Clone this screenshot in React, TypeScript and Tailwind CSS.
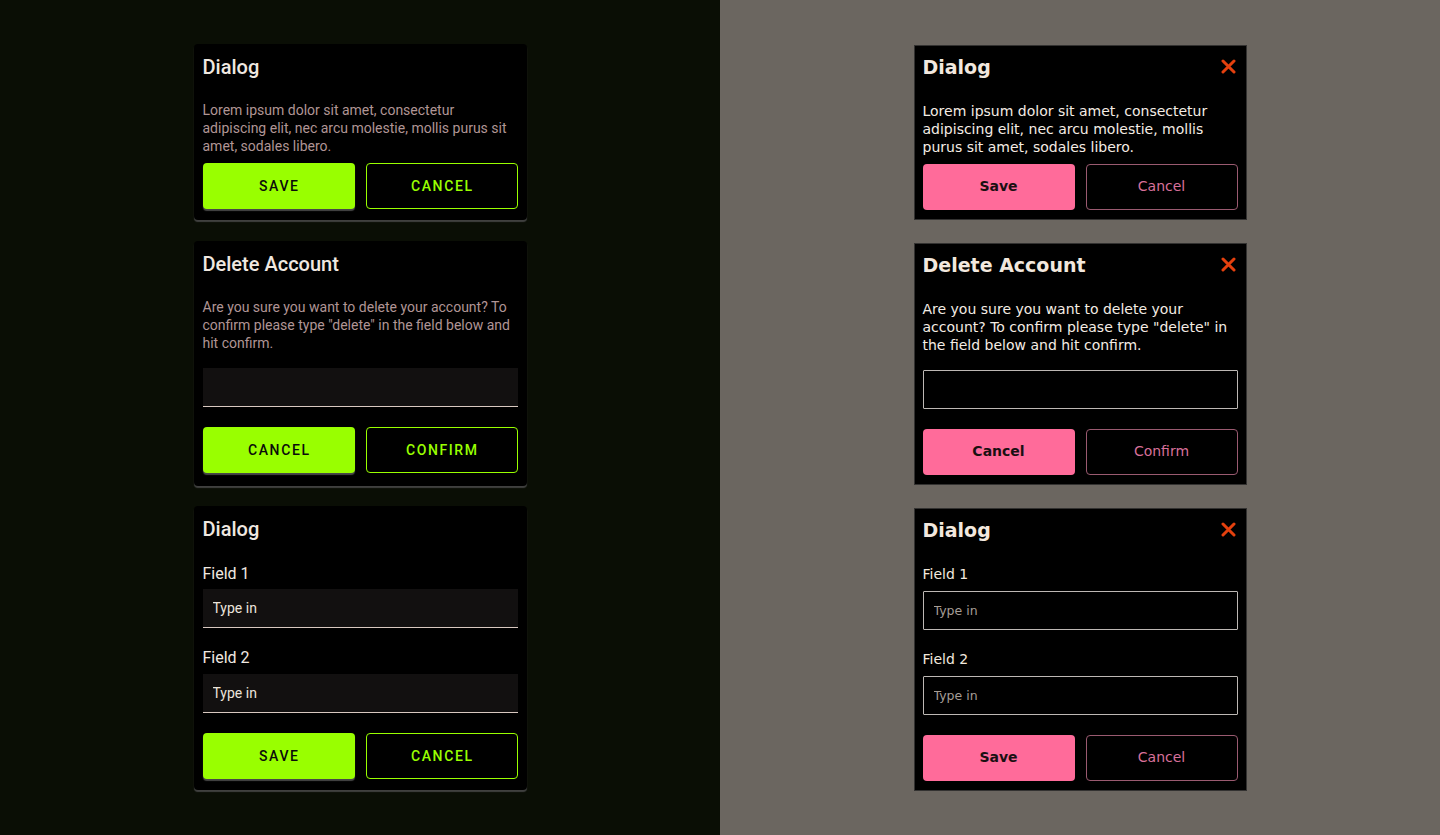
import React from 'react';

const roboto = { fontFamily: 'Roboto, "Liberation Sans", sans-serif' };
const mont = { fontFamily: '"DejaVu Sans", "Liberation Sans", sans-serif' };

/* ---------- left: material-ish dark theme ---------- */

function MatButton({ label, filled }: { label: string; filled?: boolean }) {
  return filled ? (
    <button className="h-[46px] rounded-[4px] bg-[#99ff00] pl-[1.6px] text-[14px] font-medium tracking-[1.6px] text-[#0b0b0b] shadow-[0_2px_1px_rgba(80,80,80,0.9)]">
      {label}
    </button>
  ) : (
    <button className="h-[46px] rounded-[4px] border border-[#99ff00] bg-black pl-[1.6px] text-[14px] font-medium tracking-[1.6px] text-[#99ff00]">
      {label}
    </button>
  );
}

function MatCard({ children, pad = 'pb-[11px]' }: { children: React.ReactNode; pad?: string }) {
  return (
    <div
      className={`flex w-[333px] flex-col rounded-[4px] bg-black px-[9px] pt-[9px] shadow-[0_2px_1px_rgba(70,70,70,0.9)] ${pad}`}
      style={roboto}
    >
      {children}
    </div>
  );
}

function MatTitle({ children }: { children: React.ReactNode }) {
  return <h2 className="text-[20px] font-medium leading-[28px] text-[#f0e8e0]">{children}</h2>;
}

function MatInput({ placeholder }: { placeholder?: string }) {
  return (
    <input
      className="h-[39px] w-full border-b border-[#d8c8c0] bg-[#121010] px-[10px] text-[14px] text-[#ece4dc] outline-none placeholder:text-[#ece4dc]"
      placeholder={placeholder}
    />
  );
}

/* ---------- right: pink outline theme ---------- */

function CloseX() {
  return (
    <svg width="15" height="15" viewBox="0 0 15 15" className="mr-[2px]">
      <path d="M2 2 L13 13 M13 2 L2 13" stroke="#e4400e" strokeWidth="3" strokeLinecap="round" />
    </svg>
  );
}

function PinkButton({ label, filled }: { label: string; filled?: boolean }) {
  return filled ? (
    <button className="h-[46px] rounded-[4px] bg-[#ff6b9a] text-[14px] font-semibold text-[#1a1012]">
      {label}
    </button>
  ) : (
    <button className="h-[46px] rounded-[4px] border border-[#9a5a70] bg-black text-[14px] text-[#d8709a]">
      {label}
    </button>
  );
}

function PinkCard({ children }: { children: React.ReactNode }) {
  return (
    <div className="flex w-[333px] flex-col border border-[#333231] bg-black px-[8px] pt-[7px] pb-[9px]" style={mont}>
      {children}
    </div>
  );
}

function PinkTitle({ children }: { children: React.ReactNode }) {
  return (
    <div className="flex items-center justify-between">
      <h2 className="text-[19px] font-bold leading-[28px] text-[#f2e8de]">{children}</h2>
      <CloseX />
    </div>
  );
}

function PinkInput({ placeholder }: { placeholder?: string }) {
  return (
    <input
      className="h-[39px] w-full rounded-[1px] border border-[#bdb8b4] bg-black px-[10px] text-[12.5px] text-[#f2e8de] outline-none placeholder:text-[#a59d96]"
      placeholder={placeholder}
    />
  );
}

const lorem = 'Lorem ipsum dolor sit amet, consectetur adipiscing elit, nec arcu molestie, mollis purus sit amet, sodales libero.';
const deleteText = 'Are you sure you want to delete your account? To confirm please type "delete" in the field below and hit confirm.';

export default function App() {
  return (
    <div className="flex h-[835px] w-full">
      <div className="flex w-1/2 flex-col items-center gap-[20px] bg-[#0a0e05] pt-[44px]">
        <MatCard>
          <MatTitle>Dialog</MatTitle>
          <p className="mt-[20px] text-[14px] leading-[18px] text-[#b09595]">{lorem}</p>
          <div className="mt-[8px] grid grid-cols-2 gap-[11px]">
            <MatButton label="SAVE" filled />
            <MatButton label="CANCEL" />
          </div>
        </MatCard>

        <div className="mt-[1px]">
          <MatCard pad="pb-[13px]">
            <MatTitle>Delete Account</MatTitle>
            <p className="mt-[20px] text-[14px] leading-[18px] text-[#b09595]">{deleteText}</p>
            <div className="mt-[16px]">
              <MatInput />
            </div>
            <div className="mt-[20px] grid grid-cols-2 gap-[11px]">
              <MatButton label="CANCEL" filled />
              <MatButton label="CONFIRM" />
            </div>
          </MatCard>
        </div>

        <MatCard>
          <MatTitle>Dialog</MatTitle>
          <label className="mt-[19px] block text-[16px] leading-[24px] text-[#f0e8e0]">Field 1</label>
          <div className="mt-[3px]">
            <MatInput placeholder="Type in" />
          </div>
          <label className="mt-[18px] block text-[16px] leading-[24px] text-[#f0e8e0]">Field 2</label>
          <div className="mt-[4px]">
            <MatInput placeholder="Type in" />
          </div>
          <div className="mt-[20px] grid grid-cols-2 gap-[11px]">
            <MatButton label="SAVE" filled />
            <MatButton label="CANCEL" />
          </div>
        </MatCard>
      </div>

      <div className="flex w-1/2 flex-col items-center justify-center gap-[23px] bg-[#6b6660]">
        <PinkCard>
          <PinkTitle>Dialog</PinkTitle>
          <p className="mt-[21px] text-[14px] leading-[18px] text-[#f4ece4]">{lorem}</p>
          <div className="mt-[8px] grid grid-cols-2 gap-[11px]">
            <PinkButton label="Save" filled />
            <PinkButton label="Cancel" />
          </div>
        </PinkCard>

        <PinkCard>
          <PinkTitle>Delete Account</PinkTitle>
          <p className="mt-[21px] text-[14px] leading-[18px] text-[#f4ece4]">{deleteText}</p>
          <div className="mt-[16px]">
            <PinkInput />
          </div>
          <div className="mt-[20px] grid grid-cols-2 gap-[11px]">
            <PinkButton label="Cancel" filled />
            <PinkButton label="Confirm" />
          </div>
        </PinkCard>

        <PinkCard>
          <PinkTitle>Dialog</PinkTitle>
          <label className="mt-[18px] block text-[14px] leading-[24px] text-[#f2e8de]">Field 1</label>
          <div className="mt-[5px]">
            <PinkInput placeholder="Type in" />
          </div>
          <label className="mt-[17px] block text-[14px] leading-[24px] text-[#f2e8de]">Field 2</label>
          <div className="mt-[5px]">
            <PinkInput placeholder="Type in" />
          </div>
          <div className="mt-[20px] grid grid-cols-2 gap-[11px]">
            <PinkButton label="Save" filled />
            <PinkButton label="Cancel" />
          </div>
        </PinkCard>
      </div>
    </div>
  );
}
